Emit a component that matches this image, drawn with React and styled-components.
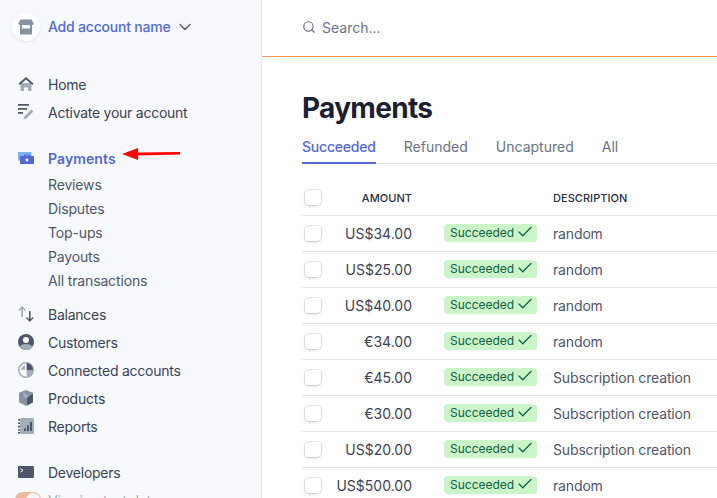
import React from "react";
import styled, { createGlobalStyle } from "styled-components";
import { ChevronDown, Search, Check } from "lucide-react";

const GlobalStyle = createGlobalStyle`
    html, body {
        margin: 0;
        height: 100%;
        overflow: hidden;
        background: white;
        font-family: "Inter", "Liberation Sans", sans-serif;
    }
    #root {
        height: 100%;
    }
`;

const HomeIcon = () => (
    <svg width="16" height="16" viewBox="0 0 16 16">
        <path d="M2.5 7h11v8H10v-3.5H6V15H2.5z" fill="#a3acb9" />
        <path d="M8 1 .6 7.6 1.8 9 8 3.6 14.2 9l1.2-1.4z" fill="#4f566b" />
    </svg>
);

const ActivateIcon = () => (
    <svg width="16" height="16" viewBox="0 0 16 16">
        <path d="M0 0h11v1.8H0zM0 4h9v1.8H0zM0 8h5v1.8H0z" fill="#4f566b" />
        <path d="M13.3 5.6 15.4 7.6 8.4 14.6 5.6 15.4 6.4 12.6z" fill="#a3acb9" />
    </svg>
);

const PaymentsIcon = () => (
    <svg width="16" height="16" viewBox="0 0 16 16">
        <path d="M0 2h13.5v4H4.2v4.5H0z" fill="#7fb0f0" />
        <path d="M2 6h14v8H2z" fill="#5469d4" />
        <path d="M6 6V4.6h6V6h-1.4v-.4H7.4V6z" fill="#5469d4" />
        <circle cx="9" cy="10" r="1.4" fill="#fff" />
    </svg>
);

const BalancesIcon = () => (
    <svg width="16" height="16" viewBox="0 0 16 16">
        <path d="M4.2 0 8 4 7 5 5 3v8H3.4V3L1.4 5 .4 4z" fill="#a3acb9" />
        <path d="M11.8 16 8 12l1-1 2 2V5h1.6v8l2-2 1 1z" fill="#4f566b" />
    </svg>
);

const CustomersIcon = () => (
    <svg width="16" height="16" viewBox="0 0 16 16">
        <circle cx="8" cy="8" r="8" fill="#4f566b" />
        <path d="M1.6 12.8C3 10.6 5.2 10 8 10s5 .6 6.4 2.8A8 8 0 0 1 1.6 12.8z" fill="#a3acb9" />
        <circle cx="8" cy="6" r="3" fill="#fff" />
    </svg>
);

const ConnectIcon = () => (
    <svg width="16" height="16" viewBox="0 0 16 16">
        <circle cx="8" cy="8" r="7.2" fill="#fff" stroke="#a3acb9" strokeWidth="1.6" />
        <path d="M8.6 1a7 7 0 0 1 6.4 6.4v1H8.6z" fill="#4f566b" />
        <path d="M7 3.4a5 5 0 0 0-4 4.4h4z" fill="#a3acb9" />
        <path d="M8.6 8.4h6.2a7 7 0 0 1-6.2 6.2z" fill="#a3acb9" />
    </svg>
);

const ProductsIcon = () => (
    <svg width="16" height="16" viewBox="0 0 16 16">
        <path d="M8 0 15 2.8V12.2L8 16 1 12.2V2.8z" fill="#8792a2" />
        <path d="M9 7 15 4V12.2L9 15.6z" fill="#4f566b" />
        <path d="M3.6 2 10.2 4.9V7.2L8 8.2 5.8 7.2V5z" fill="#a3acb9" />
    </svg>
);

const ReportsIcon = () => (
    <svg width="16" height="16" viewBox="0 0 16 16">
        <rect x="2" y="0" width="14" height="16" rx="1.5" fill="#a3acb9" />
        <path d="M0 1h2v1.6H0zM0 4.4h2V6H0zM0 7.8h2v1.6H0zM0 11.2h2v1.6H0zM0 14h2v1.6H0z" fill="#4f566b" />
        <path d="M6 10.5h2V13H6zM9 7.5h2V13H9zM12 4h2v9h-2z" fill="#4f566b" />
    </svg>
);

const DevelopersIcon = () => (
    <svg width="16" height="16" viewBox="0 0 16 16">
        <rect y="2" width="16" height="12" rx="1" fill="#4f566b" />
        <path d="M2.4 4.6 5 6.4 2.4 8.2" fill="none" stroke="#fff" strokeWidth="1" />
    </svg>
);

const StoreIcon = () => (
    <svg width="16" height="16" viewBox="0 0 16 16">
        <path d="M2.5.5h11l2.3 4.2a1.8 1.8 0 0 1-1.8 1.3H2A1.8 1.8 0 0 1 .2 4.7z" fill="#8792a2" />
        <path d="M2 6h12v9.5H2z" fill="#8792a2" />
        <path d="M4 6h8v3.5H4z" fill="#fff" />
    </svg>
);

const topNav = [
    { label: "Home", icon: <HomeIcon /> },
    { label: "Activate your account", icon: <ActivateIcon /> },
];

const paymentLinks = ["Reviews", "Disputes", "Top-ups", "Payouts", "All transactions"];

const lowerNav = [
    { label: "Balances", icon: <BalancesIcon /> },
    { label: "Customers", icon: <CustomersIcon /> },
    { label: "Connected accounts", icon: <ConnectIcon /> },
    { label: "Products", icon: <ProductsIcon /> },
    { label: "Reports", icon: <ReportsIcon /> },
];

const tabs = ["Succeeded", "Refunded", "Uncaptured", "All"];

const rows = [
    ["US$34.00", "random"],
    ["US$25.00", "random"],
    ["US$40.00", "random"],
    ["€34.00", "random"],
    ["€45.00", "Subscription creation"],
    ["€30.00", "Subscription creation"],
    ["US$20.00", "Subscription creation"],
    ["US$500.00", "random"],
];

const App = () => {
    return (
        <Page>
            <GlobalStyle />
            <Sidebar>
                <Account>
                    <AccountLogo><StoreIcon /></AccountLogo>
                    <AccountName>Add account name</AccountName>
                    <ChevronDown size={20} color="#4f566b" strokeWidth={1.5} />
                </Account>

                <NavGroup>
                    {topNav.map((item) => (
                        <NavItem key={item.label}>
                            <NavIcon>{item.icon}</NavIcon>
                            {item.label}
                        </NavItem>
                    ))}
                </NavGroup>

                <PaymentsGroup>
                    <NavItem $active>
                        <NavIcon><PaymentsIcon /></NavIcon>
                        Payments
                        <ArrowMark width="59" height="14" viewBox="0 0 59 14">
                            <path d="M0 7 16 1V5.4L58 5V7.6L16 8.4V13z" fill="#f00" />
                        </ArrowMark>
                    </NavItem>
                    {paymentLinks.map((link) => (
                        <SubItem key={link}>{link}</SubItem>
                    ))}
                </PaymentsGroup>

                <LowerGroup>
                    {lowerNav.map((item) => (
                        <NavItem key={item.label}>
                            <NavIcon>{item.icon}</NavIcon>
                            {item.label}
                        </NavItem>
                    ))}
                </LowerGroup>

                <DevGroup>
                    <NavItem>
                        <NavIcon><DevelopersIcon /></NavIcon>
                        Developers
                    </NavItem>
                    <TestRow>
                        <Toggle><ToggleKnob /></Toggle>
                        <TestLabel>Viewing test data</TestLabel>
                    </TestRow>
                </DevGroup>
            </Sidebar>

            <Main>
                <TopBar>
                    <Search size={14} color="#697386" strokeWidth={2} />
                    <SearchText>Search...</SearchText>
                </TopBar>
                <Content>
                    <Title>Payments</Title>
                    <Tabs>
                        {tabs.map((tab, i) => (
                            <Tab key={tab} $active={i === 0}>{tab}</Tab>
                        ))}
                    </Tabs>
                    <Table>
                        <HeadRow>
                            <CheckCell><Checkbox /></CheckCell>
                            <AmountHead>AMOUNT</AmountHead>
                            <StatusCell />
                            <HeadText>DESCRIPTION</HeadText>
                        </HeadRow>
                        {rows.map((row, i) => (
                            <Row key={i}>
                                <CheckCell><Checkbox /></CheckCell>
                                <Amount>{row[0]}</Amount>
                                <StatusCell>
                                    <Badge>
                                        Succeeded
                                        <Check size={18} strokeWidth={1.6} />
                                    </Badge>
                                </StatusCell>
                                <Description>{row[1]}</Description>
                            </Row>
                        ))}
                    </Table>
                </Content>
            </Main>
        </Page>
    );
};

export default App;

const Page = styled.div`
    display: flex;
    width: 717px;
    height: 498px;
    overflow: hidden;
`;

const Sidebar = styled.aside`
    flex: 0 0 262px;
    box-sizing: border-box;
    height: 498px;
    overflow: hidden;
    padding: 13px 0 0 12px;
    background: #f7fafc;
    border-right: 1px solid #e3e8ee;
`;

const Account = styled.div`
    display: flex;
    align-items: center;
    height: 28px;
    color: #4f566b;
`;

const AccountLogo = styled.div`
    display: flex;
    align-items: center;
    justify-content: center;
    width: 28px;
    height: 28px;
    margin-right: 8px;
    border-radius: 50%;
    background: white;
    box-shadow: 0 1px 3px rgba(60, 66, 87, 0.12);
`;

const AccountName = styled.span`
    position: relative;
    top: -1px;
    margin-right: 4px;
    font-size: 14px;
    font-weight: 500;
    letter-spacing: -0.2px;
    color: #5469d4;
`;

const NavGroup = styled.div`
    display: flex;
    flex-direction: column;
    margin-top: 29px;
`;

const PaymentsGroup = styled.div`
    display: flex;
    flex-direction: column;
    margin-top: 18px;
`;

const LowerGroup = styled.div`
    display: flex;
    flex-direction: column;
    margin-top: 8px;
`;

const DevGroup = styled.div`
    display: flex;
    flex-direction: column;
    margin-top: 18px;
`;

const NavItem = styled.div`
    position: relative;
    display: flex;
    align-items: center;
    height: 28px;
    font-size: 14px;
    font-weight: ${(props) => (props.$active ? 600 : 400)};
    letter-spacing: ${(props) => (props.$active ? "0.1px" : "-0.25px")};
    color: ${(props) => (props.$active ? "#5469d4" : "#3c4257")};
`;

const NavIcon = styled.span`
    display: flex;
    align-items: center;
    width: 16px;
    height: 16px;
    margin: 0 14px 0 6px;
`;

const ArrowMark = styled.svg`
    position: absolute;
    left: 110px;
    top: 3px;
`;

const SubItem = styled.div`
    display: flex;
    align-items: center;
    height: 24px;
    padding-left: 36px;
    font-size: 14px;
    letter-spacing: -0.15px;
    color: #4f566b;
`;

const TestRow = styled.div`
    display: flex;
    align-items: flex-start;
    height: 24px;
    margin-top: 6px;
    padding-left: 3px;
`;

const Toggle = styled.div`
    position: relative;
    box-sizing: border-box;
    width: 26px;
    height: 16px;
    margin-right: 7px;
    border-radius: 8px;
    background: #efb6a0;
`;

const ToggleKnob = styled.span`
    position: absolute;
    top: 1px;
    right: 1px;
    width: 14px;
    height: 14px;
    border-radius: 50%;
    background: #f4f6f8;
`;

const TestLabel = styled.span`
    font-size: 14px;
    letter-spacing: -0.2px;
    color: #a3acb9;
`;

const Main = styled.main`
    flex: 1;
    min-width: 0;
    background: white;
`;

const TopBar = styled.div`
    display: flex;
    align-items: center;
    box-sizing: border-box;
    height: 57px;
    padding: 0 0 2px 40px;
    border-bottom: 1px solid #f7955a;
`;

const SearchText = styled.span`
    margin-left: 6px;
    font-size: 14px;
    color: #697386;
`;

const Content = styled.div`
    padding: 33px 0 0 40px;
`;

const Title = styled.h1`
    margin: 0;
    font-size: 28px;
    line-height: 36px;
    font-weight: 700;
    letter-spacing: -0.7px;
    color: #1a1f36;
`;

const Tabs = styled.div`
    display: flex;
    gap: 28px;
    margin-top: 4px;
    height: 34px;
    box-sizing: border-box;
    border-bottom: 1px solid #e3e8ee;
`;

const Tab = styled.div`
    height: 34px;
    box-sizing: border-box;
    padding-top: 8px;
    font-size: 14px;
    font-weight: ${(props) => (props.$active ? 500 : 400)};
    letter-spacing: ${(props) => (props.$active ? "-0.2px" : "0")};
    color: ${(props) => (props.$active ? "#5469d4" : "#697386")};
    border-bottom: ${(props) => (props.$active ? "2px solid #5469d4" : "none")};
`;

const Table = styled.div`
    display: flex;
    flex-direction: column;
    margin-top: 16px;
`;

const HeadRow = styled.div`
    display: flex;
    align-items: center;
    height: 36px;
    border-bottom: 1px solid #e3e8ee;
    box-sizing: border-box;
`;

const Row = styled(HeadRow)``;

const CheckCell = styled.div`
    display: flex;
    flex: 0 0 28px;
    padding: 0 0 1px 3px;
    box-sizing: border-box;
`;

const Checkbox = styled.span`
    display: block;
    box-sizing: border-box;
    width: 16px;
    height: 15px;
    border-radius: 4px;
    background: white;
    box-shadow: 0 0 0 1px rgba(60, 66, 87, 0.16), 0 2px 3px rgba(60, 66, 87, 0.12);
`;

const Amount = styled.div`
    flex: 0 0 82px;
    text-align: right;
    font-size: 14px;
    color: #3c4257;
`;

const AmountHead = styled(Amount)`
    font-size: 11px;
    font-weight: 500;
    letter-spacing: 0.05px;
    color: #2a2f45;
`;

const StatusCell = styled.div`
    display: flex;
    flex: 0 0 141px;
    box-sizing: border-box;
    padding: 0 0 1px 32px;
`;

const Badge = styled.span`
    display: inline-flex;
    align-items: center;
    gap: 2px;
    box-sizing: border-box;
    height: 18px;
    width: 93px;
    padding: 0 0 2px 6px;
    border-radius: 4px;
    font-size: 12px;
    background: #cbf4c9;
    color: #0e6245;
`;

const HeadText = styled.div`
    font-size: 11px;
    font-weight: 500;
    letter-spacing: 0.05px;
    color: #2a2f45;
`;

const Description = styled.div`
    font-size: 14px;
    letter-spacing: -0.15px;
    color: #4f566b;
`;
